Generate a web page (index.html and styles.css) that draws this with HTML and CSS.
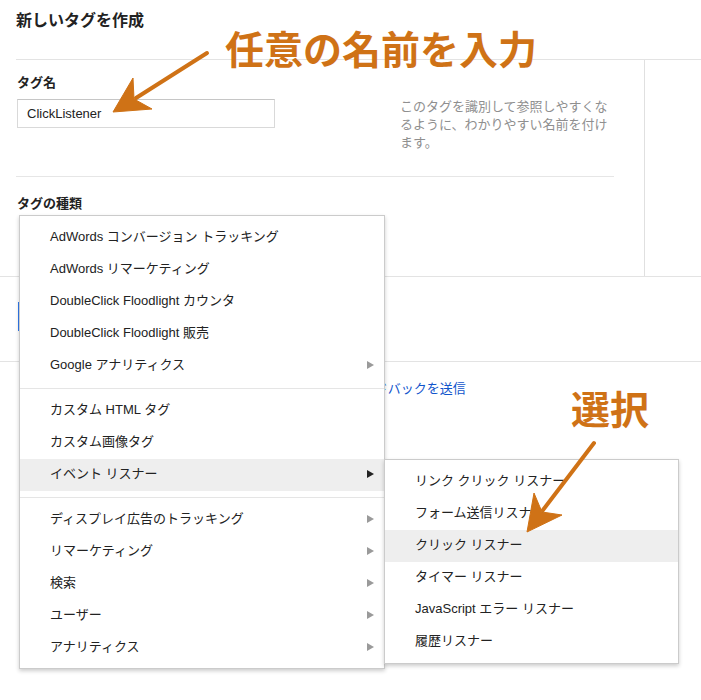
FILE: index.html
```html
<!DOCTYPE html>
<html lang="ja">
<head>
<meta charset="utf-8">
<title>新しいタグを作成</title>
<link rel="stylesheet" href="styles.css">
</head>
<body>
<div class="page">
  <header class="title">新しいタグを作成</header>
  <div class="main">
    <div class="content">
      <section class="name-field">
        <div class="label">タグ名</div>
        <div class="input">ClickListener</div>
        <p class="help">このタグを識別して参照しやすくなるように、わかりやすい名前を付けます。</p>
      </section>
      <section class="type-field">
        <div class="label">タグの種類</div>
        <div class="select"></div>
      </section>
    </div>
    <div class="sidebar"></div>
  </div>
  <div class="actions">
    <div class="btn-primary">タグを作成</div>
  </div>
  <div class="feedback"><a class="link">フィードバックを送信</a></div>
</div>

<div class="menu main-menu">
  <div class="item"><span>AdWords コンバージョン トラッキング</span></div>
  <div class="item"><span>AdWords リマーケティング</span></div>
  <div class="item"><span>DoubleClick Floodlight カウンタ</span></div>
  <div class="item"><span>DoubleClick Floodlight 販売</span></div>
  <div class="item"><span>Google アナリティクス</span><i class="arrow"></i></div>
  <div class="sep"></div>
  <div class="item"><span>カスタム HTML タグ</span></div>
  <div class="item"><span>カスタム画像タグ</span></div>
  <div class="item active"><span>イベント リスナー</span><i class="arrow"></i></div>
  <div class="sep"></div>
  <div class="item"><span>ディスプレイ広告のトラッキング</span><i class="arrow"></i></div>
  <div class="item"><span>リマーケティング</span><i class="arrow"></i></div>
  <div class="item"><span>検索</span><i class="arrow"></i></div>
  <div class="item"><span>ユーザー</span><i class="arrow"></i></div>
  <div class="item"><span>アナリティクス</span><i class="arrow"></i></div>
</div>

<div class="menu sub-menu">
  <div class="item"><span>リンク クリック リスナー</span></div>
  <div class="item"><span>フォーム送信リスナー</span></div>
  <div class="item active"><span>クリック リスナー</span></div>
  <div class="item"><span>タイマー リスナー</span></div>
  <div class="item"><span>JavaScript エラー リスナー</span></div>
  <div class="item"><span>履歴リスナー</span></div>
</div>

<div class="note note-name">任意の名前を入力</div>
<div class="note note-select">選択</div>
<svg class="arrows" width="701" height="700" viewBox="0 0 701 700">
  <g fill="#cf7216" stroke="#cf7216">
    <line x1="207" y1="53" x2="136" y2="98" stroke-width="4" stroke-linecap="round"/>
    <path d="M113 112 L152 109 L134 99 L133 78 Z" stroke-width="1" stroke-linejoin="round"/>
    <line x1="594" y1="443" x2="543" y2="510" stroke-width="4" stroke-linecap="round"/>
    <path d="M527 532 L562 515 L542 512 L534 493 Z" stroke-width="1" stroke-linejoin="round"/>
  </g>
</svg>
</body>
</html>
```
FILE: styles.css
```css
html, body {
  margin: 0;
  padding: 0;
  background: #fff;
}
body {
  font-family: "Liberation Sans", "Noto Sans CJK JP", sans-serif;
  font-size: 13px;
  color: #222;
  width: 701px;
  height: 700px;
  position: relative;
  overflow: hidden;
}
.page {
  width: 701px;
}
.title {
  height: 59px;
  box-sizing: border-box;
  padding: 13px 0 0 16px;
  font-size: 16px;
  line-height: 16px;
  font-weight: bold;
}
.main {
  margin-left: 16px;
  border-top: 1px solid #e3e3e3;
  display: flex;
  height: 216px;
}
.content {
  width: 629px;
  box-sizing: border-box;
  border-right: 1px solid #e0e0e0;
}
.sidebar {
  flex: 1;
}
.label {
  font-weight: bold;
  font-size: 13px;
  line-height: 16px;
}
.name-field {
  width: 598px;
  height: 117px;
  box-sizing: border-box;
  border-bottom: 1px solid #e6e6e6;
  padding: 15px 0 0 1px;
  display: grid;
  grid-template-columns: 258px 214px;
  grid-template-rows: 16px 29px;
  row-gap: 8px;
  column-gap: 125px;
  align-items: start;
}
.name-field .label {
  grid-column: 1;
  grid-row: 1;
}
.input {
  grid-column: 1;
  grid-row: 2;
  height: 29px;
  box-sizing: border-box;
  border: 1px solid #d9d9d9;
  border-top-color: #c6c6c6;
  padding: 0 9px;
  line-height: 27px;
  font-size: 13px;
  color: #222;
}
.help {
  grid-column: 2;
  grid-row: 1 / span 2;
  margin: 23px 0 0;
  font-size: 13px;
  line-height: 18px;
  color: #8f8f8f;
}
.type-field {
  height: 99px;
  box-sizing: border-box;
  padding: 19px 0 0 1px;
}
.type-field .label {
  margin-bottom: 3px;
}
.select {
  margin-left: 2px;
  width: 366px;
  height: 29px;
  box-sizing: border-box;
  border: 1px solid #d9d9d9;
}
.actions {
  border-top: 1px solid #e3e3e3;
  border-bottom: 1px solid #e3e3e3;
  height: 86px;
  box-sizing: border-box;
  padding: 25px 0 0 18px;
}
.btn-primary {
  display: inline-block;
  height: 29px;
  line-height: 29px;
  padding: 0 16px;
  background: #4d90fe;
  border: 1px solid #3079ed;
  box-sizing: border-box;
  color: #fff;
  font-weight: bold;
}
.feedback {
  padding: 19px 0 0 336px;
  line-height: 16px;
}
.link {
  color: #15c;
  text-decoration: none;
}

/* Menus (overlay) */
.menu {
  position: absolute;
  background: #fff;
  border: 1px solid #cbcbcb;
  box-shadow: 0 2px 4px rgba(0, 0, 0, 0.2);
  box-sizing: border-box;
  z-index: 5;
}
.main-menu {
  left: 19px;
  top: 215px;
  width: 366px;
  padding: 6px 0 4px;
}
.sub-menu {
  left: 384px;
  top: 459px;
  width: 295px;
  padding: 6px 0 5px;
  z-index: 6;
}
.item {
  height: 32px;
  box-sizing: border-box;
  padding: 1px 10px 3px 30px;
  line-height: 28px;
  display: flex;
  align-items: center;
  justify-content: space-between;
  color: #222;
  white-space: nowrap;
}
.item.active {
  background: #eee;
}
.sep {
  margin: 6px 0;
  border-top: 1px solid #e5e5e5;
}
.arrow {
  display: block;
  width: 0;
  height: 0;
  border-left: 7px solid #9a9a9a;
  border-top: 4px solid transparent;
  border-bottom: 4px solid transparent;
}
.item.active .arrow {
  border-left-color: #222;
}

/* Annotations */
.note {
  position: absolute;
  z-index: 10;
  color: #cf7216;
  font-size: 39px;
  line-height: 39px;
  font-weight: bold;
  white-space: nowrap;
  font-family: "Noto Sans CJK JP", sans-serif;
}
.note-name {
  left: 225px;
  top: 28px;
}
.note-select {
  left: 571px;
  top: 388px;
}
.arrows {
  position: absolute;
  left: 0;
  top: 0;
  z-index: 11;
  pointer-events: none;
}
```
